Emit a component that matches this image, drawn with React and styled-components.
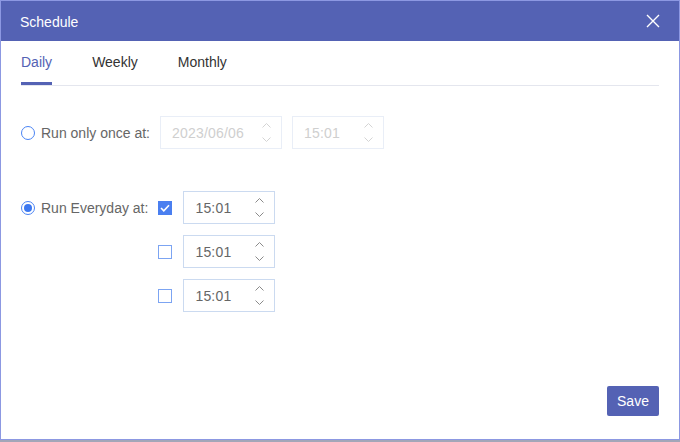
import React from "react";
import styled, { createGlobalStyle } from "styled-components";

const Global = createGlobalStyle`
  html, body {
    margin: 0;
    padding: 0;
    background: #a3a6b8;
  }
  body {
    font-family: "Liberation Sans", Arial, sans-serif;
    font-size: 14px;
  }
`;

const Dialog = styled.div`
  box-sizing: border-box;
  width: 680px;
  height: 440px;
  border: 1px solid #8c98e2;
  background: #fff;
  display: flex;
  flex-direction: column;
`;

const Header = styled.div`
  height: 40px;
  background: #5462b4;
  color: #fff;
  display: flex;
  align-items: center;
  justify-content: space-between;
  padding: 0 19px 0 19px;
  line-height: 20px;
`;

const Title = styled.div`
  font-size: 14px;
  padding-top: 1px;
`;

const CloseBtn = styled.button`
  border: 0;
  background: none;
  padding: 0;
  width: 14px;
  height: 14px;
  display: flex;
  cursor: pointer;
`;

const TabBar = styled.div`
  margin: 0 20px;
  display: flex;
  gap: 40px;
  border-bottom: 1px solid #e4e6ee;
`;

const Tab = styled.div`
  padding: 11px 0 10px;
  line-height: 20px;
  color: ${(p) => (p.$active ? "#5462b4" : "#333")};
  border-bottom: 3px solid ${(p) => (p.$active ? "#5462b4" : "transparent")};
`;

const Body = styled.div`
  flex: 1;
  padding: 30px 20px 0;
  display: flex;
  flex-direction: column;
  gap: 42px;
`;

const Row = styled.div`
  display: flex;
  align-items: flex-start;
  gap: 10px;
`;

const RadioLabel = styled.label`
  display: flex;
  align-items: center;
  gap: 6px;
  height: 33px;
  color: #666;
  font-size: 14px;
`;

const Radio = styled.span`
  box-sizing: border-box;
  width: 14px;
  height: 14px;
  border-radius: 50%;
  border: 1px solid #4a84f4;
  display: flex;
  align-items: center;
  justify-content: center;
  &::after {
    content: "";
    width: 8px;
    height: 8px;
    border-radius: 50%;
    background: #3c78f0;
    display: ${(p) => (p.$checked ? "block" : "none")};
  }
`;

const Inputs = styled.div`
  display: flex;
  gap: 10px;
`;

const TimeList = styled.div`
  display: flex;
  flex-direction: column;
  gap: 11px;
`;

const TimeRow = styled.div`
  display: flex;
  align-items: center;
  gap: 11px;
`;

const Check = styled.span`
  box-sizing: border-box;
  width: 14px;
  height: 14px;
  border: 1px solid ${(p) => (p.$checked ? "#4a7ff0" : "#7ca4f2")};
  background: ${(p) => (p.$checked ? "#4a7ff0" : "#fff")};
  display: flex;
  align-items: center;
  justify-content: center;
`;

const Spin = styled.div`
  box-sizing: border-box;
  width: ${(p) => p.$w}px;
  height: 33px;
  border: 1px solid ${(p) => (p.$disabled ? "#e9eef7" : "#cbdaf0")};
  display: flex;
  align-items: center;
  justify-content: space-between;
  padding: 0 10px 0 11px;
  color: ${(p) => (p.$disabled ? "#cfcfcf" : "#666")};
  font-size: 14px;
  letter-spacing: 0.2px;
`;

const Arrows = styled.div`
  display: flex;
  flex-direction: column;
  gap: 9px;
  color: ${(p) => (p.$disabled ? "#d4d4d4" : "#8a8a8a")};
`;

const Footer = styled.div`
  display: flex;
  justify-content: flex-end;
  padding: 0 20px 23px;
`;

const SaveBtn = styled.button`
  width: 52px;
  height: 30px;
  border: 0;
  border-radius: 2px;
  background: #5462b4;
  color: #fff;
  font-family: "Liberation Sans", Arial, sans-serif;
  font-size: 14px;
  cursor: pointer;
`;

const Chevron = ({ up }) => (
  <svg width="9" height="5" viewBox="0 0 9 5" fill="none">
    <path
      d={up ? "M0.5 4.5 L4.5 0.5 L8.5 4.5" : "M0.5 0.5 L4.5 4.5 L8.5 0.5"}
      stroke="currentColor"
      strokeWidth="1"
    />
  </svg>
);

function SpinInput({ value, width = 92, disabled }) {
  return (
    <Spin $w={width} $disabled={disabled}>
      <span>{value}</span>
      <Arrows $disabled={disabled}>
        <Chevron up />
        <Chevron />
      </Arrows>
    </Spin>
  );
}

function CheckBox({ checked }) {
  return (
    <Check $checked={checked}>
      {checked && (
        <svg width="10" height="8" viewBox="0 0 10 8" fill="none">
          <path d="M1 4 L3.8 6.8 L9 1.2" stroke="#fff" strokeWidth="1.6" />
        </svg>
      )}
    </Check>
  );
}

export default function App() {
  const times = [true, false, false];
  return (
    <>
      <Global />
      <Dialog>
        <Header>
          <Title>Schedule</Title>
          <CloseBtn aria-label="close">
            <svg width="14" height="14" viewBox="0 0 14 14">
              <path d="M1 1 L13 13 M13 1 L1 13" stroke="#fff" strokeWidth="1.4" />
            </svg>
          </CloseBtn>
        </Header>
        <TabBar>
          <Tab $active>Daily</Tab>
          <Tab>Weekly</Tab>
          <Tab>Monthly</Tab>
        </TabBar>
        <Body>
          <Row>
            <RadioLabel>
              <Radio />
              Run only once at:
            </RadioLabel>
            <Inputs>
              <SpinInput value="2023/06/06" width={122} disabled />
              <SpinInput value="15:01" disabled />
            </Inputs>
          </Row>
          <Row>
            <RadioLabel>
              <Radio $checked />
              Run Everyday at:
            </RadioLabel>
            <TimeList>
              {times.map((c, i) => (
                <TimeRow key={i}>
                  <CheckBox checked={c} />
                  <SpinInput value="15:01" />
                </TimeRow>
              ))}
            </TimeList>
          </Row>
        </Body>
        <Footer>
          <SaveBtn>Save</SaveBtn>
        </Footer>
      </Dialog>
    </>
  );
}
